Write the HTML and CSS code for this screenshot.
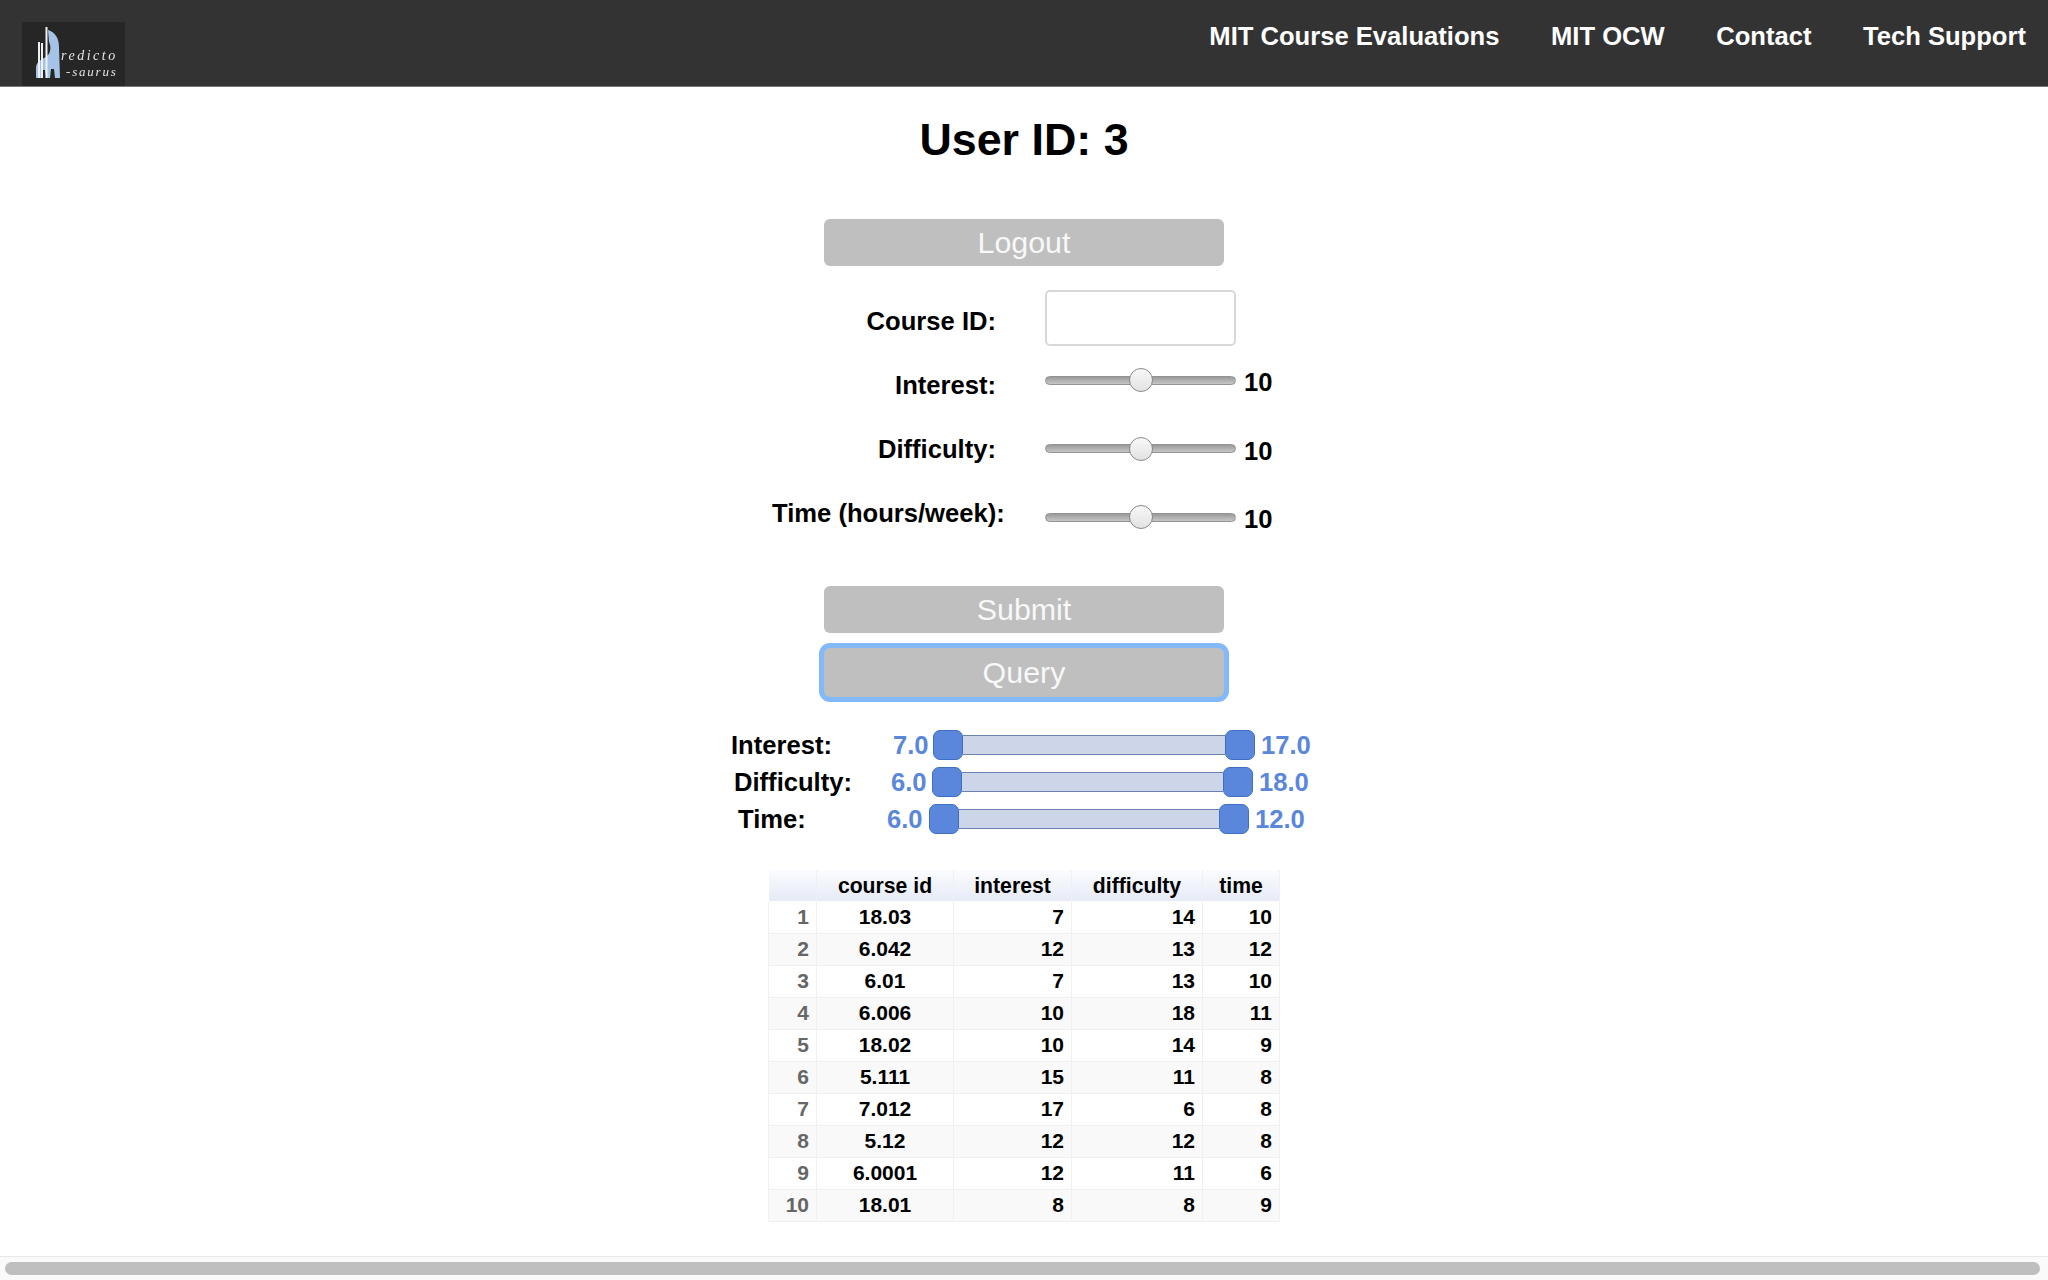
FILE: index.html
```html
<!DOCTYPE html>
<html lang="en">
<head>
<meta charset="utf-8">
<title>Predictosaurus</title>
<link rel="stylesheet" href="styles.css">
</head>
<body>
<header class="nav">
  <a class="logo" href="#" aria-label="Predictosaurus">
    <svg class="logo-svg" viewBox="0 0 103 64" width="103" height="64">
      <path class="giraffe" d="M26 8 C33 10 37 16 37 25 L38 56 L33 56 L32 47 L29 47 L28 56 L24 56 L23 48 L20 48 L19 56 L14 56 L14 45 C15 38 21 38 26 33 C29 30 29 24 27 20 Z"/>
      <path class="stem" d="M24.5 5 L24.5 56 M17 20 L17 56 M20 21 L20 56"/>
      <text class="logo-a" x="39" y="38">redicto</text>
      <text class="logo-b" x="44" y="54">-saurus</text>
    </svg>
  </a>
  <nav class="links">
    <a href="#">MIT Course Evaluations</a>
    <a href="#">MIT OCW</a>
    <a href="#">Contact</a>
    <a href="#">Tech Support</a>
  </nav>
</header>

<main class="main">
  <h1 class="title">User ID: 3</h1>
  <button class="btn btn-logout">Logout</button>

  <form class="form">
    <div class="labels">
      <label class="lbl">Course ID:</label>
      <label class="lbl">Interest:</label>
      <label class="lbl">Difficulty:</label>
      <label class="lbl lbl-wide">Time (hours/week):</label>
    </div>
    <div class="controls">
      <input class="text-input" type="text">
      <div class="slider-row"><input class="range" type="range" min="0" max="20" value="10"><span class="val">10</span></div>
      <div class="slider-row"><input class="range" type="range" min="0" max="20" value="10"><span class="val">10</span></div>
      <div class="slider-row"><input class="range" type="range" min="0" max="20" value="10"><span class="val">10</span></div>
    </div>
  </form>

  <button class="btn btn-submit">Submit</button>
  <button class="btn btn-query">Query</button>

  <section class="filters">
    <div class="filter f-interest">
      <span class="f-label">Interest:</span><span class="f-min">7.0</span>
      <div class="dual"><span class="handle"></span><span class="fill"></span><span class="handle"></span></div>
      <span class="f-max">17.0</span>
    </div>
    <div class="filter f-difficulty">
      <span class="f-label">Difficulty:</span><span class="f-min">6.0</span>
      <div class="dual"><span class="handle"></span><span class="fill"></span><span class="handle"></span></div>
      <span class="f-max">18.0</span>
    </div>
    <div class="filter f-time">
      <span class="f-label">Time:</span><span class="f-min">6.0</span>
      <div class="dual"><span class="handle"></span><span class="fill"></span><span class="handle"></span></div>
      <span class="f-max">12.0</span>
    </div>
  </section>

  <table class="grid">
    <colgroup><col class="c0"><col class="c1"><col class="c2"><col class="c3"><col class="c4"></colgroup>
    <thead><tr><th></th><th>course id</th><th>interest</th><th>difficulty</th><th>time</th></tr></thead>
    <tbody>
      <tr><th>1</th><td class="cid">18.03</td><td>7</td><td>14</td><td>10</td></tr>
      <tr><th>2</th><td class="cid">6.042</td><td>12</td><td>13</td><td>12</td></tr>
      <tr><th>3</th><td class="cid">6.01</td><td>7</td><td>13</td><td>10</td></tr>
      <tr><th>4</th><td class="cid">6.006</td><td>10</td><td>18</td><td>11</td></tr>
      <tr><th>5</th><td class="cid">18.02</td><td>10</td><td>14</td><td>9</td></tr>
      <tr><th>6</th><td class="cid">5.111</td><td>15</td><td>11</td><td>8</td></tr>
      <tr><th>7</th><td class="cid">7.012</td><td>17</td><td>6</td><td>8</td></tr>
      <tr><th>8</th><td class="cid">5.12</td><td>12</td><td>12</td><td>8</td></tr>
      <tr><th>9</th><td class="cid">6.0001</td><td>12</td><td>11</td><td>6</td></tr>
      <tr><th>10</th><td class="cid">18.01</td><td>8</td><td>8</td><td>9</td></tr>
    </tbody>
  </table>
</main>

<div class="hscroll"><div class="hthumb"></div></div>
</body>
</html>
```

FILE: styles.css
```css
* { box-sizing: border-box; }
html, body { margin: 0; height: 1280px; overflow: hidden; }
body {
  display: flex;
  flex-direction: column;
  background: #fff;
  color: #000;
  font-family: "Liberation Sans", Arial, sans-serif;
}

/* top bar */
.nav {
  display: flex;
  justify-content: space-between;
  height: 87px;
  padding: 0 22px;
  background: #333;
  border-bottom: 1px solid #777;
  flex: none;
}
.logo {
  display: block;
  width: 103px;
  height: 64px;
  margin-top: 22px;
  background: #262626;
}
.logo-svg { display: block; filter: blur(0.5px); }
.giraffe { fill: #a5c3e6; }
.stem { stroke: #eef1f4; stroke-width: 2; fill: none; }
.logo-a, .logo-b {
  font-family: "Liberation Serif", serif;
  font-style: italic;
  fill: #e4e4e4;
  font-size: 14px;
  letter-spacing: 2.5px;
}
.logo-b { font-size: 13px; letter-spacing: 1.8px; }
.links { display: flex; gap: 51.5px; }
.links a {
  color: #fff;
  font-size: 25.6px;
  font-weight: 700;
  line-height: 30px;
  margin-top: 21px;
  text-decoration: none;
}

/* main column */
.main {
  display: flex;
  flex-direction: column;
  align-items: center;
  flex: 1;
}
.title {
  margin: 26px 0 0;
  font-size: 44.8px;
  line-height: 52px;
  font-weight: 700;
}
.btn {
  display: block;
  width: 400px;
  height: 47px;
  padding: 0;
  border: 0;
  border-radius: 6px;
  background: #bfbfbf;
  color: #f8f8f8;
  font-family: "Liberation Sans", Arial, sans-serif;
  font-size: 30.4px;
  line-height: 47px;
}
.btn-logout { margin-top: 54px; }
.btn-submit { margin-top: 25px; }
.btn-query {
  margin-top: 15px;
  height: 49px;
  box-shadow: 0 0 0 5px #82b9fa;
}

/* form */
.form {
  display: flex;
  width: 504px;
  margin-top: 24px;
}
.labels {
  display: flex;
  flex-direction: column;
  width: 230px;
  margin-right: 43px;
  padding-top: 15px;
}
.lbl {
  display: block;
  height: 64px;
  padding-right: 6px;
  font-size: 25.6px;
  font-weight: 700;
  line-height: 32px;
  text-align: right;
  white-space: nowrap;
}
.lbl-wide { padding-right: 1px; }
.controls {
  display: flex;
  flex-direction: column;
  width: 231px;
}
.text-input {
  display: block;
  width: 191px;
  height: 56px;
  padding: 0;
  border: 2px solid #d8d8d8;
  border-radius: 5px;
  background: #fff;
}
.slider-row {
  display: flex;
  align-items: center;
  gap: 8px;
  height: 36px;
  margin-top: 32.5px;
}
.slider-row:first-of-type { margin-top: 16px; }
.val {
  position: relative;
  top: 2px;
  font-size: 25.6px;
  font-weight: 700;
  line-height: 30px;
}
.range {
  -webkit-appearance: none;
  appearance: none;
  width: 191px;
  height: 24px;
  margin: 0;
  background: transparent;
}
.range::-webkit-slider-runnable-track {
  height: 9px;
  border: 1px solid #939393;
  border-radius: 4.5px;
  background: linear-gradient(#9a9a9a, #c6c6c6);
}
.range::-webkit-slider-thumb {
  -webkit-appearance: none;
  width: 24px;
  height: 24px;
  margin-top: -8.5px;
  border: 1px solid #8a8a8a;
  border-radius: 50%;
  background: linear-gradient(#f8f8f8, #e2e2e2);
}

/* dual range filters */
.filters {
  display: flex;
  flex-direction: column;
  gap: 7px;
  width: 640px;
  margin-top: 33px;
}
.filter {
  display: flex;
  align-items: center;
  height: 30px;
  font-size: 25.6px;
  font-weight: 700;
}
.f-interest { margin-left: 27px; }
.f-difficulty { margin-left: 30px; }
.f-time { margin-left: 34px; }
.f-label { line-height: 30px; }
.f-interest .f-label { width: 162px; }
.f-difficulty .f-label { width: 157px; }
.f-time .f-label { width: 149px; }
.f-min, .f-max { color: #5a87dc; line-height: 30px; }
.f-min { width: 34px; }
.f-max { margin-left: 6px; }
.dual {
  display: flex;
  align-items: center;
  width: 322px;
  height: 30px;
  margin-left: 6px;
}
.f-difficulty .dual { width: 321px; margin-left: 7px; }
.f-time .dual { width: 320px; margin-left: 8px; }
.handle {
  flex: none;
  width: 30px;
  height: 30px;
  border: 1.5px solid #3f6fc4;
  border-radius: 7px;
  background: #5a87dc;
}
.fill {
  flex: 1;
  height: 20px;
  border-top: 1.5px solid #6b82b0;
  border-bottom: 1.5px solid #6b82b0;
  background: #cdd6e8;
}

/* result table */
.grid {
  width: 511px;
  margin-top: 36px;
  border-collapse: collapse;
  table-layout: fixed;
  font-size: 21px;
  font-weight: 700;
}
.c0 { width: 48px; }
.c1 { width: 137px; }
.c2 { width: 118px; }
.c3 { width: 131px; }
.c4 { width: 77px; }
.grid th, .grid td {
  height: 32px;
  padding: 0 7px;
  border: 1px solid #f0f0f0;
  border-top: 0;
  line-height: 24px;
  text-align: right;
}
.grid thead th {
  height: 31px;
  border: 0;
  border-right: 1px solid #f0f0f0;
  background: linear-gradient(#fbfcff, #e6eaf6);
  font-size: 21.2px;
  font-weight: 700;
  text-align: center;
}
.grid tbody th { color: #666; font-weight: 700; }
.grid tbody tr:nth-child(even) { background: #f9f9f9; }
.grid .cid { text-align: center; }

/* page scrollbar */
.hscroll {
  flex: none;
  height: 24px;
  padding: 5px 8px 5px 5px;
  border-top: 1px solid #e8e8e8;
  background: #fafafa;
}
.hthumb {
  height: 13px;
  border-radius: 7px;
  background: #bfbfbf;
}
```
